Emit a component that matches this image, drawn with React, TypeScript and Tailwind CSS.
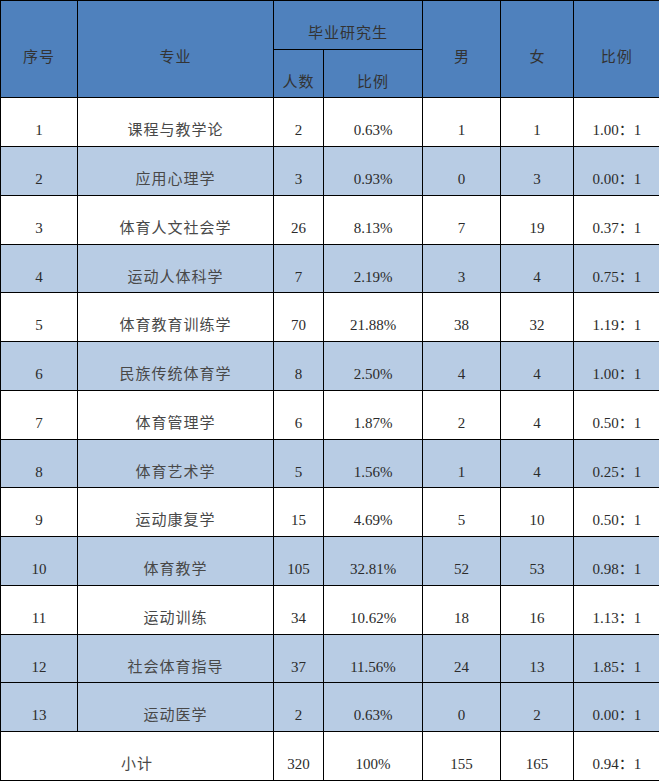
import React from 'react';

type Row = [string, string, string, string, string, string, string];

const rows: Row[] = [
  ['1', '课程与教学论', '2', '0.63%', '1', '1', '1.00：1'],
  ['2', '应用心理学', '3', '0.93%', '0', '3', '0.00：1'],
  ['3', '体育人文社会学', '26', '8.13%', '7', '19', '0.37：1'],
  ['4', '运动人体科学', '7', '2.19%', '3', '4', '0.75：1'],
  ['5', '体育教育训练学', '70', '21.88%', '38', '32', '1.19：1'],
  ['6', '民族传统体育学', '8', '2.50%', '4', '4', '1.00：1'],
  ['7', '体育管理学', '6', '1.87%', '2', '4', '0.50：1'],
  ['8', '体育艺术学', '5', '1.56%', '1', '4', '0.25：1'],
  ['9', '运动康复学', '15', '4.69%', '5', '10', '0.50：1'],
  ['10', '体育教学', '105', '32.81%', '52', '53', '0.98：1'],
  ['11', '运动训练', '34', '10.62%', '18', '16', '1.13：1'],
  ['12', '社会体育指导', '37', '11.56%', '24', '13', '1.85：1'],
  ['13', '运动医学', '2', '0.63%', '0', '2', '0.00：1'],
];

const blueRows = [2, 4, 6, 8, 10, 12, 13];
const heights = [49, 49, 49, 48, 49, 49, 49, 48, 49, 49, 49, 48, 49];

const cell = 'border border-black text-center align-middle pt-[16px] px-0 pb-0 font-normal';
// Chinese labels read thinner and greyer than the figures
const zh = ' font-light text-[#484848] tracking-[1px]';

export default function App() {
  return (
    <div className="bg-white w-[659px] h-[781px] overflow-hidden">
      <table
        className="w-[659px] table-fixed border-collapse text-[15px] text-[#2b2b2b] leading-[18px] border-r-0"
        style={{ fontFamily: '"Liberation Serif", "Noto Sans CJK SC", serif' }}
      >
        <colgroup>
          <col className="w-[77px]" />
          <col className="w-[196px]" />
          <col className="w-[50px]" />
          <col className="w-[99px]" />
          <col className="w-[78px]" />
          <col className="w-[73px]" />
          <col className="w-[86px]" />
        </colgroup>
        <thead className="bg-[#4f81bd]">
          <tr className="h-[49px]">
            <th rowSpan={2} className={cell + ' font-light text-[#333] tracking-[1px]'}>序号</th>
            <th rowSpan={2} className={cell + ' font-light text-[#333] tracking-[1px]'}>专业</th>
            <th colSpan={2} className={cell + ' font-light text-[#333] tracking-[1px]'}>毕业研究生</th>
            <th rowSpan={2} className={cell + ' font-light text-[#333]'}>男</th>
            <th rowSpan={2} className={cell + ' font-light text-[#333]'}>女</th>
            <th rowSpan={2} className={cell + ' border-r-0 font-light text-[#333] tracking-[1px]'}>比例</th>
          </tr>
          <tr className="h-[48px]">
            <th className={cell + ' font-light text-[#333] tracking-[1px]'}>人数</th>
            <th className={cell + ' font-light text-[#333] tracking-[1px]'}>比例</th>
          </tr>
        </thead>
        <tbody>
          {rows.map((r, i) => (
            <tr
              key={r[0]}
              style={{ height: heights[i] }}
              className={blueRows.includes(i + 1) ? 'bg-[#b8cce4]' : 'bg-white'}
            >
              {r.map((v, j) => (
                <td
                  key={j}
                  className={cell + (j === 1 ? zh : '') + (j === 6 ? ' border-r-0' : '')}
                >
                  {v}
                </td>
              ))}
            </tr>
          ))}
          <tr className="h-[49px] bg-white">
            <td colSpan={2} className={cell + zh}>小计</td>
            <td className={cell}>320</td>
            <td className={cell}>100%</td>
            <td className={cell}>155</td>
            <td className={cell}>165</td>
            <td className={cell + ' border-r-0'}>0.94：1</td>
          </tr>
        </tbody>
      </table>
    </div>
  );
}
